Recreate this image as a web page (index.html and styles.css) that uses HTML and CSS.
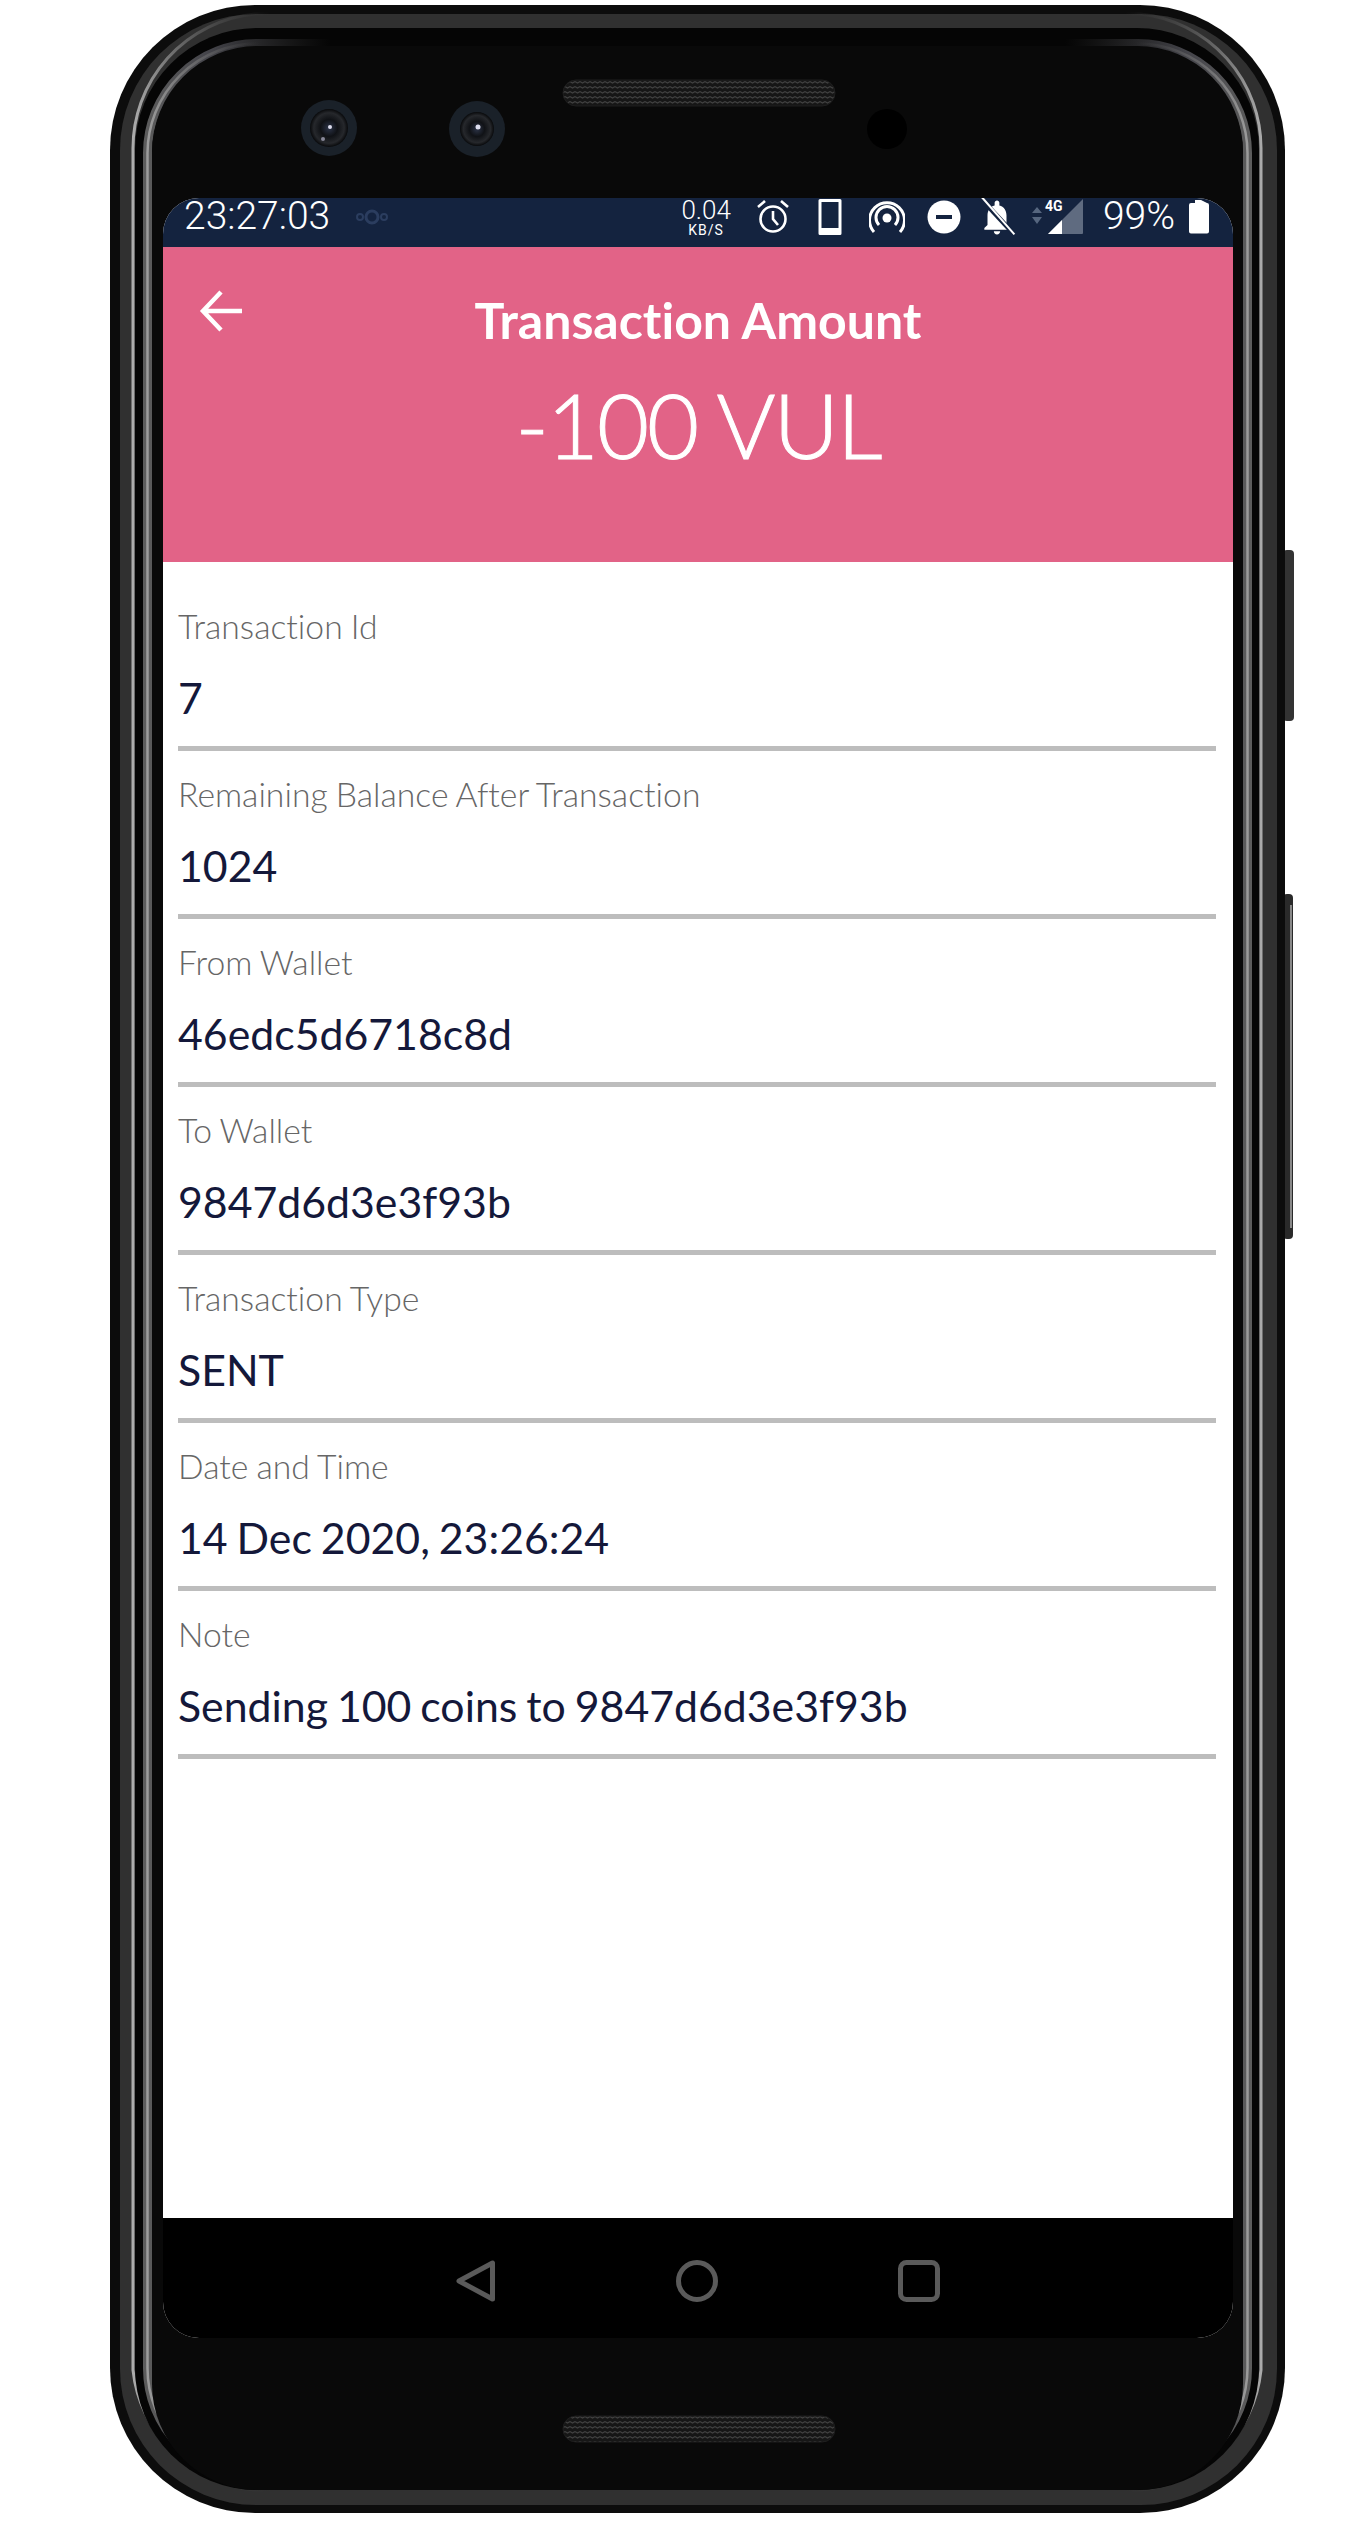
FILE: index.html
```html
<!DOCTYPE html>
<html lang="en">
<head>
  <meta charset="UTF-8" />
  <meta name="viewport" content="width=device-width, initial-scale=1.0"/>
  <title>Transaction Amount</title>
  <link rel="stylesheet" href="styles.css">
</head>
<body>
  <!-- phone body, drawn behind the screen -->
  <svg class="frame" width="1370" height="2534" viewBox="0 0 1370 2534">
    <defs>
      <linearGradient id="brightL" gradientUnits="userSpaceOnUse" x1="130" y1="0" x2="270" y2="0">
        <stop offset="0" stop-color="#b0b0b0"/>
        <stop offset="0.3" stop-color="#707070"/>
        <stop offset="1" stop-color="#3a3a3a" stop-opacity="0"/>
      </linearGradient>
      <linearGradient id="brightR" gradientUnits="userSpaceOnUse" x1="1265" y1="0" x2="1125" y2="0">
        <stop offset="0" stop-color="#b0b0b0"/>
        <stop offset="0.3" stop-color="#707070"/>
        <stop offset="1" stop-color="#3a3a3a" stop-opacity="0"/>
      </linearGradient>
      <linearGradient id="innerL" gradientUnits="userSpaceOnUse" x1="144" y1="0" x2="331" y2="0">
        <stop offset="0" stop-color="#5c5c5c"/>
        <stop offset="0.35" stop-color="#44444a"/>
        <stop offset="1" stop-color="#333" stop-opacity="0"/>
      </linearGradient>
      <linearGradient id="innerR" gradientUnits="userSpaceOnUse" x1="1252" y1="0" x2="1065" y2="0">
        <stop offset="0" stop-color="#5c5c5c"/>
        <stop offset="0.35" stop-color="#44444a"/>
        <stop offset="1" stop-color="#333" stop-opacity="0"/>
      </linearGradient>
      <linearGradient id="lineL" gradientUnits="userSpaceOnUse" x1="144" y1="0" x2="260" y2="0">
        <stop offset="0" stop-color="#a0a0a0"/>
        <stop offset="1" stop-color="#555" stop-opacity="0"/>
      </linearGradient>
      <linearGradient id="lineR" gradientUnits="userSpaceOnUse" x1="1252" y1="0" x2="1136" y2="0">
        <stop offset="0" stop-color="#a0a0a0"/>
        <stop offset="1" stop-color="#555" stop-opacity="0"/>
      </linearGradient>
      <pattern id="mesh" width="5" height="5" patternUnits="userSpaceOnUse">
        <rect width="5" height="5" fill="#161616"/>
        <path d="M0 1.5 L2.5 3 L5 1.5" stroke="#404040" stroke-width="1.1" fill="none"/>
      </pattern>
      <radialGradient id="lens">
        <stop offset="0" stop-color="#2c3448"/>
        <stop offset="0.45" stop-color="#101216"/>
        <stop offset="0.8" stop-color="#26282c"/>
        <stop offset="1" stop-color="#08090b"/>
      </radialGradient>
    </defs>

    <rect x="1283" y="550" width="11" height="171" rx="4" fill="#333"/>
    <rect x="1283" y="894" width="10" height="345" rx="4" fill="#2a2a2a"/>
    <path d="M1291 905V1228" stroke="#aaa" stroke-width="1.5"/>

    <rect x="110" y="5" width="1175" height="2508" rx="145" fill="#0c0c0c"/>
    <rect x="120" y="14" width="1157" height="2491" rx="136" fill="#303030"/>
    <path d="M340 14H255A135 135 0 0 0 133 150V2370A135 135 0 0 0 255 2490H340" fill="none" stroke="url(#brightL)" stroke-width="3"/>
    <path d="M1056 14H1140A135 135 0 0 1 1261 150V2370A135 135 0 0 1 1140 2490H1056" fill="none" stroke="url(#brightR)" stroke-width="3"/>
    <rect x="135" y="28" width="1124" height="2462" rx="122" fill="#050505"/>
    <path d="M331 43.5H258A110 110 0 0 0 147.5 153V2368A110 110 0 0 0 258 2478H331" fill="none" stroke="url(#innerL)" stroke-width="9"/>
    <path d="M1065 43.5H1138A110 110 0 0 1 1247.5 153V2368A110 110 0 0 1 1138 2478H1065" fill="none" stroke="url(#innerR)" stroke-width="9"/>
    <path d="M260 43.500H258A110 110 0 0 0 147.500 153V2368A110 110 0 0 0 258 2478H260" fill="none" stroke="url(#lineL)" stroke-width="2.500"/>
    <path d="M1136 43.500H1138A110 110 0 0 1 1247.500 153V2368A110 110 0 0 1 1138 2478H1136" fill="none" stroke="url(#lineR)" stroke-width="2.500"/>
    <rect x="152" y="46" width="1091" height="2444" rx="106" fill="#090909"/>

    <rect x="563" y="80" width="272" height="26" rx="13" fill="url(#mesh)" stroke="#1e1e1e"/>
    <rect x="563" y="2416" width="272" height="26" rx="13" fill="url(#mesh)" stroke="#1e1e1e"/>

    <circle cx="329" cy="128" r="28" fill="#1a2129"/>
    <circle cx="329" cy="128" r="19" fill="url(#lens)"/>
    <circle cx="330" cy="127" r="2" fill="#dde"/>
    <circle cx="323" cy="139" r="2" fill="#889"/>
    <circle cx="477" cy="129" r="28" fill="#1a2129"/>
    <circle cx="477" cy="129" r="17" fill="url(#lens)"/>
    <circle cx="478" cy="127" r="2.5" fill="#dde"/>
    <circle cx="887" cy="129" r="20" fill="#000"/>
  </svg>

  <div class="screen">
    <div class="status-bar">
      <span class="clock">23:27:03</span>
      <svg class="sync" width="32" height="18" viewBox="0 0 32 18">
        <circle cx="16" cy="9" r="6" fill="none" stroke="#2b3d5f" stroke-width="3"/>
        <circle cx="4" cy="9" r="3" fill="none" stroke="#2b3d5f" stroke-width="2"/>
        <circle cx="28" cy="9" r="3" fill="none" stroke="#2b3d5f" stroke-width="2"/>
      </svg>
      <div class="net-speed">
        <span class="net-value">0.04</span>
        <span class="net-unit">KB/S</span>
      </div>
      <div class="status-icon">
        <svg width="36" height="38" viewBox="0 0 36 38">
          <circle cx="18" cy="21" r="12.5" fill="none" stroke="#fff" stroke-width="2.6"/>
          <path d="M18 13V21L23 27M3 9L10 3M33 9L26 3" fill="none" stroke="#fff" stroke-width="2.6"/>
        </svg>
      </div>
      <div class="status-icon">
        <svg width="24" height="36" viewBox="0 0 24 36">
          <path fill="#fff" fill-rule="evenodd" d="M2 0H22A1.5 1.5 0 0 1 23.500 1.500V34.500A1.500 1.500 0 0 1 22 36H2A1.500 1.500 0 0 1 .5 34.500V1.500A1.500 1.500 0 0 1 2 0ZM3.500 3V29H20.500V3Z"/>
        </svg>
      </div>
      <div class="status-icon">
        <svg width="36" height="34" viewBox="0 0 36 34">
          <circle cx="18" cy="18" r="4.500" fill="#fff"/>
          <path d="M10 25A11 11 0 1 1 26 25M5 32A17.500 17.500 0 1 1 31 32" fill="none" stroke="#fff" stroke-width="3"/>
        </svg>
      </div>
      <div class="status-icon">
        <svg width="34" height="34" viewBox="0 0 34 34">
          <circle cx="17" cy="17" r="16.500" fill="#fff"/>
          <rect x="9" y="15" width="16" height="4" fill="#14233f"/>
        </svg>
      </div>
      <div class="status-icon">
        <svg width="40" height="38" viewBox="0 0 24 24">
          <path fill="#fff" d="M12 23c1.100 0 2-.9 2-2h-4c0 1.100.89 2 2 2zm6-6v-6c0-3.070-1.640-5.640-4.500-6.320V3c0-.83-.67-1.500-1.500-1.500s-1.500.67-1.500 1.500v1.680C7.630 5.360 6 7.920 6 11v6l-2 2v1h16v-1l-2-2z"/>
          <path d="M1.500 0L22 22" stroke="#14233f" stroke-width="3"/>
          <path d="M2 -1L23 23" stroke="#fff" stroke-width="1.300"/>
        </svg>
      </div>
      <svg class="signal" width="54" height="36" viewBox="0 0 54 36">
        <path d="M1 14L6 8L11 14ZM1 18L6 25L11 18Z" fill="#56667f"/>
        <path d="M52 0V34A1 1 0 0 1 51 35H17Z" fill="#5f6b80"/>
        <path d="M31 21V35H17Z" fill="#fff"/>
        <text class="signal-text" x="14" y="12">4G</text>
      </svg>
      <span class="battery-level">99%</span>
      <svg class="battery" width="20" height="34" viewBox="0 0 20 34">
        <path fill="#fff" d="M2 3H6V0H12L18 3A2 2 0 0 1 20 5V31.500A2 2 0 0 1 18 33.500H2A2 2 0 0 1 0 31.500V5A2 2 0 0 1 2 3Z"/>
      </svg>
    </div>

    <header class="amount-header">
      <div class="title-row">
        <svg class="back-arrow" width="44" height="44" viewBox="0 0 44 44">
          <path d="M22 3L4 22L22 41M4 22H43" fill="none" stroke="#fff" stroke-width="4.500" transform="translate(0 -1)"/>
        </svg>
        <h1>Transaction Amount</h1>
      </div>
      <div class="amount">-100 VUL</div>
    </header>

    <main class="details">
      <div class="row">
        <div class="row-label">Transaction Id</div>
        <div class="row-value">7</div>
      </div>
      <div class="row">
        <div class="row-label">Remaining Balance After Transaction</div>
        <div class="row-value">1024</div>
      </div>
      <div class="row">
        <div class="row-label">From Wallet</div>
        <div class="row-value">46edc5d6718c8d</div>
      </div>
      <div class="row">
        <div class="row-label">To Wallet</div>
        <div class="row-value">9847d6d3e3f93b</div>
      </div>
      <div class="row">
        <div class="row-label">Transaction Type</div>
        <div class="row-value">SENT</div>
      </div>
      <div class="row">
        <div class="row-label">Date and Time</div>
        <div class="row-value">14 Dec 2020, 23:26:24</div>
      </div>
      <div class="row">
        <div class="row-label">Note</div>
        <div class="row-value">Sending 100 coins to 9847d6d3e3f93b</div>
      </div>
    </main>

    <nav class="nav-bar">
      <svg width="40" height="42" viewBox="0 0 40 42">
        <path d="M36.500 3V39L3 21Z" fill="none" stroke="#5a5a5a" stroke-width="5" stroke-linejoin="round"/>
      </svg>
      <svg width="42" height="42" viewBox="0 0 42 42">
        <circle cx="21" cy="21" r="18.500" fill="none" stroke="#5a5a5a" stroke-width="5"/>
      </svg>
      <svg width="42" height="42" viewBox="0 0 42 42">
        <rect x="2.500" y="2.500" width="37" height="37" rx="6" fill="none" stroke="#5a5a5a" stroke-width="5"/>
      </svg>
    </nav>
  </div>
</body>
</html>
```

FILE: styles.css
```css
* { box-sizing: border-box; }
body {
  margin: 0;
  width: 1370px;
  height: 2534px;
  background-color: #fff;
  font-family: Lato, "Open Sans", sans-serif;
  font-variant-ligatures: none;
  overflow: hidden;
}
.frame {
  position: absolute;
  top: 0;
  left: 0;
}
.screen {
  position: relative;
  width: 1070px;
  height: 2140px;
  margin: 198px 0 0 163px;
  border-radius: 36px;
  overflow: hidden;
  display: flex;
  flex-direction: column;
  background-color: #fff;
}

/* status bar */
.status-bar {
  height: 49px;
  flex: none;
  display: flex;
  align-items: center;
  padding: 0 24px 11px 21px;
  background-color: #14233f;
  color: #fff;
  font-family: Roboto, sans-serif;
}
.clock {
  font-size: 39px;
  line-height: 32px;
  font-weight: 300;
  margin-top: -2px;
}
.sync { margin-left: 26px; }
.net-speed {
  display: flex;
  flex-direction: column;
  align-items: center;
  margin-left: auto;
  margin-right: 3px;
  line-height: 1;
}
.net-value {
  font-size: 26px;
  font-weight: 300;
  margin-top: -1px;
}
.net-unit {
  font-size: 14px;
  letter-spacing: 1px;
}
.status-icon {
  width: 57px;
  display: flex;
  justify-content: center;
}
.status-icon:nth-child(4) { margin-left: 11px; }
.status-icon:nth-child(8) { margin-left: -4px; }
.signal { margin-left: 5px; }
.signal-text {
  font-family: Roboto, sans-serif;
  font-size: 14px;
  font-weight: 700;
  fill: #fff;
}
.battery-level {
  font-size: 39px;
  line-height: 32px;
  font-weight: 300;
  margin: -2px 0 0 18px;
}
.battery { margin-left: 14px; }

/* pink header */
.amount-header {
  height: 315px;
  flex: none;
  padding-top: 45px;
  background-color: #e26387;
  color: #fff;
  text-align: center;
}
.title-row {
  display: grid;
  grid-template-columns: 1fr auto 1fr;
}
.back-arrow {
  align-self: start;
  margin: -2px 0 0 36px;
}
h1 {
  margin: 0;
  font-size: 50px;
  line-height: 56px;
  font-weight: 700;
}
.amount {
  margin-top: 26px;
  font-size: 90px;
  line-height: 100px;
  font-weight: 300;
  letter-spacing: -2px;
  -webkit-text-stroke: 1px #fff;
}

/* detail rows */
.details {
  flex: 1;
  padding: 21px 17px 0 15px;
}
.row {
  height: 168px;
  padding-top: 23px;
  border-bottom: 5px solid #bdbdbd;
}
.row-label {
  font-size: 33.7px;
  line-height: 40px;
  font-weight: 300;
  word-spacing: -1px;
  color: #666;
}
.row-value {
  margin-top: 27px;
  font-size: 42.8px;
  line-height: 50px;
  word-spacing: -2px;
  color: #14183a;
}

/* android nav buttons */
.nav-bar {
  height: 120px;
  flex: none;
  display: flex;
  justify-content: center;
  gap: 180px;
  padding-top: 42px;
  background-color: #000;
}
```
